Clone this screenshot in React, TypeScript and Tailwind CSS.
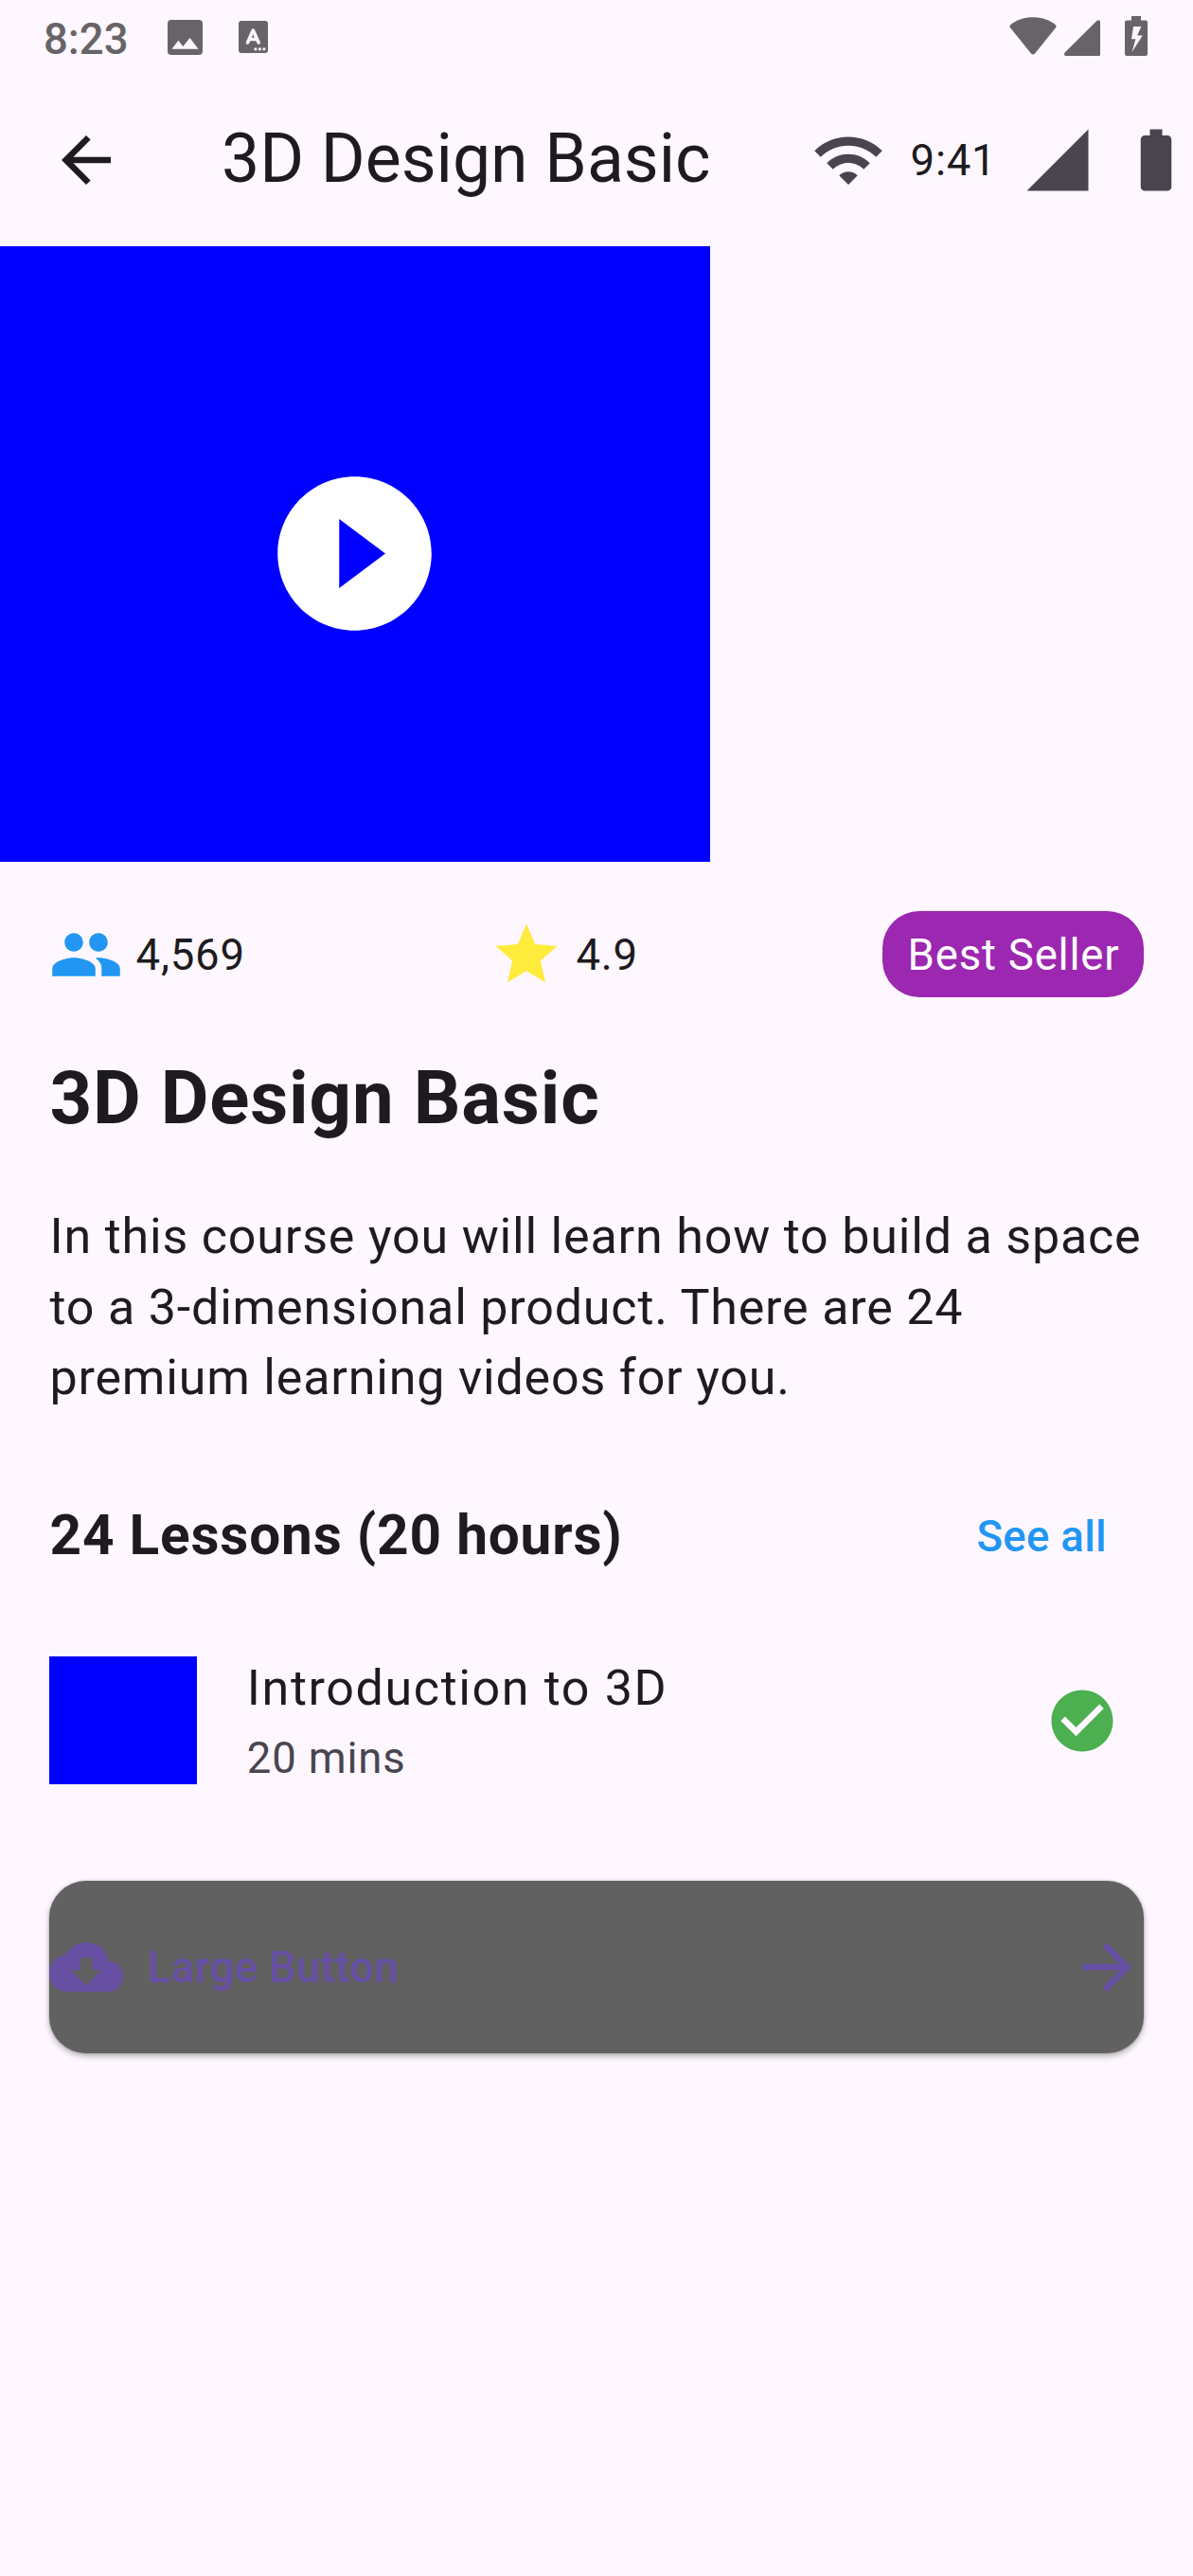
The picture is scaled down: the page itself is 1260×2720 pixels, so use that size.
import type { ReactNode } from "react";

type IconProps = { d: string; className: string };

function Icon({ d, className }: IconProps) {
  return (
    <svg viewBox="0 0 24 24" fill="currentColor" className={`block shrink-0 ${className}`}>
      <path d={d} />
    </svg>
  );
}

const paths = {
  back: "M20 11H7.83l5.59-5.59L12 4l-8 8 8 8 1.41-1.41L7.83 13H20v-2z",
  forward: "M12 4l-1.41 1.41L16.17 11H4v2h12.17l-5.58 5.59L12 20l8-8z",
  wifi: "M1 9l2 2c4.97-4.97 13.03-4.97 18 0l2-2C16.93 2.93 7.08 2.93 1 9zm8 8l3 3 3-3c-1.65-1.66-4.34-1.66-6 0zm-4-4l2 2c2.76-2.76 7.24-2.76 10 0l2-2C15.14 9.14 8.87 9.14 5 13z",
  signal: "M2 22h20V2z",
  battery:
    "M15.67 4H14V2h-4v2H8.33C7.6 4 7 4.6 7 5.33v15.33C7 21.4 7.6 22 8.33 22h7.33c.74 0 1.34-.6 1.34-1.33V5.33C17 4.6 16.4 4 15.67 4z",
  play: "M12 2C6.48 2 2 6.48 2 12s4.48 10 10 10 10-4.48 10-10S17.52 2 12 2zm-2 14.5v-9l6 4.5-6 4.5z",
  people:
    "M16 11c1.66 0 2.99-1.34 2.99-3S17.66 5 16 5s-3 1.34-3 3 1.34 3 3 3zm-8 0c1.66 0 2.99-1.34 2.99-3S9.66 5 8 5 5 6.34 5 8s1.34 3 3 3zm0 2c-2.33 0-7 1.17-7 3.5V19h14v-2.5c0-2.33-4.67-3.5-7-3.5zm8 0c-.29 0-.62.02-.97.05 1.16.84 1.97 1.97 1.97 3.45V19h6v-2.5c0-2.33-4.67-3.5-7-3.5z",
  star: "M12 17.27L18.18 21l-1.64-7.03L22 9.24l-7.19-.61L12 2 9.19 8.63 2 9.24l5.46 4.73L5.82 21z",
  check:
    "M12 2C6.48 2 2 6.48 2 12s4.48 10 10 10 10-4.48 10-10S17.52 2 12 2zm-2 15l-5-5 1.41-1.41L10 14.17l7.59-7.59L19 8l-9 9z",
  download:
    "M19.35 10.04C18.67 6.59 15.64 4 12 4 9.11 4 6.6 5.64 5.35 8.04 2.34 8.36 0 10.91 0 14c0 3.31 2.69 6 6 6h13c2.76 0 5-2.24 5-5 0-2.64-2.05-4.78-4.65-4.96zM17 13l-5 5-5-5h3V9h4v4h3z",
};

function StatusBar() {
  return (
    <div className="flex h-[78px] items-start text-[#666467]">
      <div className="ml-[46px] mt-[15px] w-[130.5px] text-[45.5px] leading-[54px] font-medium">8:23</div>
      <svg viewBox="0 0 37 37" className="mt-[20.5px] block h-[37px] w-[37px]" fill="currentColor">
        <path
          fillRule="evenodd"
          d="M4 0H33A4 4 0 0 1 37 4V33A4 4 0 0 1 33 37H4A4 4 0 0 1 0 33V4A4 4 0 0 1 4 0ZM4.5 30.7H32.5L23.5 19 16.3 28 11.3 21.8Z"
        />
      </svg>
      <svg viewBox="0 0 31 34" className="ml-[38px] mt-[22px] block h-[34px] w-[31px]">
        <rect width="31" height="34" rx="3" fill="currentColor" />
        <path d="M9.5 23L15.3 10L21.2 23M11.5 19.5H19" fill="none" stroke="#fef7ff" strokeWidth="3.6" strokeLinecap="round" strokeLinejoin="round" />
        <path d="M16.5 28.5h2.8v2.8h-2.8zM21 28.5h2.8v2.8h-2.8zM25.5 28.5h2.8v2.8h-2.8z" fill="#fef7ff" />
      </svg>
      <div className="ml-auto mr-[48px] flex items-start">
        <svg viewBox="0 0 50 40" className="mt-[18px] block h-[40px] w-[50px]" fill="currentColor">
          <path d="M1.2 8.2C8 2.8 16 0.3 25 0.3S42 2.8 48.8 8.2Q50.2 9.5 49 11.2L27 38.6Q25 40.6 23 38.6L1 11.2Q-.2 9.5 1.2 8.2Z" />
        </svg>
        <svg viewBox="0 0 38 38" className="ml-[8px] mt-[21px] block h-[38px] w-[38px]" fill="currentColor">
          <path d="M.6 34.6L34.6.7Q38-.8 38 2.2V36.5Q38 38 36.5 38H1.5Q-.6 38 .2 35.2Z" />
        </svg>
        <svg viewBox="0 0 24 42" className="ml-[26px] mt-[17px] block h-[42px] w-[24px]" fill="currentColor">
          <path
            fillRule="evenodd"
            d="M7 0H17V4.6H22Q24 4.6 24 6.6V40Q24 42 22 42H2Q0 42 0 40V6.6Q0 4.6 2 4.6H7ZM9 11L7 24.2H11.4L7.5 38 18.7 20.6H13.2L17.3 11Z"
          />
        </svg>
      </div>
    </div>
  );
}

function AppBar() {
  return (
    <header className="flex h-[182px] items-center pl-[52px]">
      <Icon d={paths.back} className="h-[78px] w-[78px]" />
      <h1 className="ml-[104px] pb-[3px] text-[71.5px] leading-[91px] whitespace-nowrap">3D Design Basic</h1>
      <div className="ml-auto flex items-center gap-[26px] text-[#49454f]">
        <Icon d={paths.wifi} className="h-[78px] w-[78px]" />
        <span className="w-[91px] pl-[0.5px] text-[45.5px] leading-[65px] tracking-[0.8125px] text-[#1d1b20]">9:41</span>
        <Icon d={paths.signal} className="h-[78px] w-[78px]" />
        <Icon d={paths.battery} className="h-[78px] w-[78px]" />
      </div>
    </header>
  );
}

function Stat({ icon, children }: { icon: ReactNode; children: ReactNode }) {
  return (
    <div className="flex items-center gap-[13px]">
      {icon}
      <span className="pt-[2px] pl-[0.5px]">{children}</span>
    </div>
  );
}

export default function App() {
  return (
    <div className="h-[2720px] w-[1260px] overflow-hidden bg-[#fef7ff] font-['Roboto',sans-serif] text-[#1d1b20]">
      <StatusBar />
      <AppBar />
      <div className="flex h-[650px] w-[750px] items-center justify-center bg-[#0000ff]">
        <Icon d={paths.play} className="mr-[0.6px] mb-[0.6px] h-[195px] w-[195px] text-white" />
      </div>
      <main className="flex flex-col px-[52px] pt-[52px]">
        <div className="flex h-[91px] items-center justify-between text-[45.5px] leading-[65px] tracking-[0.8125px]">
          <Stat icon={<Icon d={paths.people} className="h-[78px] w-[78px] text-[#2196f3]" />}>4,569</Stat>
          <Stat icon={<Icon d={paths.star} className="h-[78px] w-[78px] text-[#ffeb3b]" />}>4.9</Stat>
          <span className="rounded-[39px] bg-[#9c27b0] pt-[14px] pr-[25.5px] pb-[12px] pl-[26.5px] text-white">Best Seller</span>
        </div>
        <h2 className="mt-[51px] pl-[0.5px] text-[78px] leading-[111.4px] font-bold tracking-[0.8125px]">3D Design Basic</h2>
        <p className="mt-[54px] pl-[0.5px] text-[52px] leading-[74.4px] tracking-[0.8125px] whitespace-nowrap">
          In this course you will learn how to build a space
          <br />
          to a 3-dimensional product. There are 24
          <br />
          premium learning videos for you.
        </p>
        <div className="mt-[51px] flex h-[156px] items-center justify-between">
          <h3 className="pb-[2px] pl-[0.5px] text-[58.5px] leading-[84px] font-bold tracking-[0.8125px]">24 Lessons (20 hours)</h3>
          <button className="px-[39px] pt-[2px] text-[45.5px] leading-[65px] font-medium tracking-[0.325px] text-[#2196f3]">See all</button>
        </div>
        <div className="flex h-[234px] items-center pr-[26px]">
          <div className="h-[135px] w-[156px] bg-[#0000ff]" />
          <div className="ml-[52px] flex-1 pl-[0.8px]">
            <div className="text-[52px] leading-[75px] tracking-[1.625px]">Introduction to 3D</div>
            <div className="-mb-[1px] pt-[4px] text-[45.5px] leading-[65px] tracking-[0.8125px] text-[#49454f]">20 mins</div>
          </div>
          <Icon d={paths.check} className="h-[78px] w-[78px] text-[#4caf50]" />
        </div>
        <button className="mt-[52px] flex h-[182px] items-center rounded-[39px] bg-[#616161] text-[#6750a4] shadow-[0_3px_6px_rgba(0,0,0,0.3),0_0_2px_rgba(0,0,0,0.3)]">
          <Icon d={paths.download} className="h-[78px] w-[78px]" />
          <span className="ml-[26px] pt-[2px] text-[45.5px] leading-[65px] font-medium tracking-[0.325px]">Large Button</span>
          <Icon d={paths.forward} className="ml-auto h-[78px] w-[78px]" />
        </button>
      </main>
    </div>
  );
}
